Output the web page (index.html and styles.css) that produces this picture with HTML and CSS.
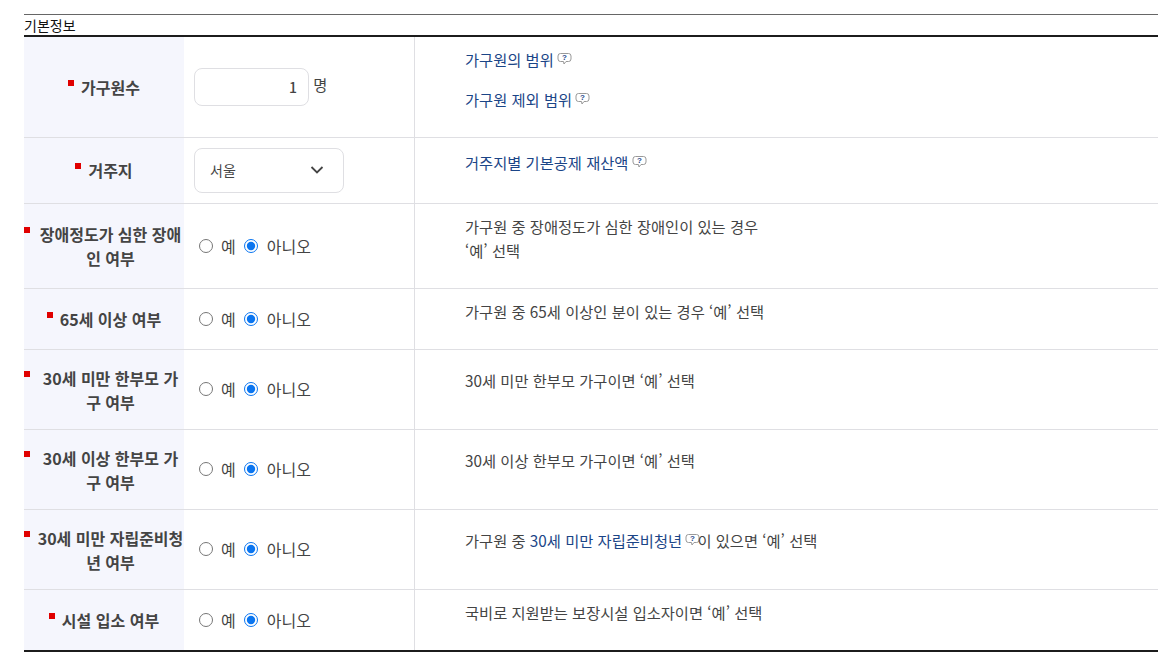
FILE: index.html
```html
<!DOCTYPE html>
<html lang="ko">
<head>
    <meta charset="UTF-8">
    <meta name="viewport" content="width=device-width, initial-scale=1.0">
    <title>기본정보</title>
    <link rel="stylesheet" href="styles.css">
</head>
<body>
    <table class="info-table">
        <caption>기본정보</caption>
        <tbody>
            <tr class="row-household">
                <th><div class="label"><span class="req"></span><span class="label-text">가구원수</span></div></th>
                <td class="field">
                    <input class="num-input" type="text" value="1"> <span class="unit">명</span>
                </td>
                <td class="note links">
                    <p><a href="#">가구원의 범위</a> <svg class="help" viewBox="0 0 14 12"><path d="M3 .5h8A2.500 2.500 0 0 1 13.500 3v3A2.500 2.500 0 0 1 11 8.500H8.500L6.500 11 6 8.500H3A2.500 2.500 0 0 1 .5 6V3A2.500 2.500 0 0 1 3 .5z"/><text x="7" y="7">?</text></svg></p>
                    <p><a href="#">가구원 제외 범위</a> <svg class="help" viewBox="0 0 14 12"><path d="M3 .5h8A2.500 2.500 0 0 1 13.500 3v3A2.500 2.500 0 0 1 11 8.500H8.500L6.500 11 6 8.500H3A2.500 2.500 0 0 1 .5 6V3A2.500 2.500 0 0 1 3 .5z"/><text x="7" y="7">?</text></svg></p>
                </td>
            </tr>
            <tr class="row-region">
                <th><div class="label"><span class="req"></span><span class="label-text">거주지</span></div></th>
                <td class="field">
                    <div class="select-wrap">
                        <select class="region-select"><option>서울</option></select>
                        <svg class="chevron" width="14" height="8" viewBox="0 0 14 8"><path d="M1.500 1 7 6.500 12.500 1" fill="none" stroke="#444" stroke-width="1.800"/></svg>
                    </div>
                </td>
                <td class="note">
                    <p><a href="#">거주지별 기본공제 재산액</a> <svg class="help" viewBox="0 0 14 12"><path d="M3 .5h8A2.500 2.500 0 0 1 13.500 3v3A2.500 2.500 0 0 1 11 8.500H8.500L6.500 11 6 8.500H3A2.500 2.500 0 0 1 .5 6V3A2.500 2.500 0 0 1 3 .5z"/><text x="7" y="7">?</text></svg></p>
                </td>
            </tr>
            <tr class="row-disabled">
                <th><div class="label"><span class="req"></span><span class="label-text">장애정도가 심한 장애인 여부</span></div></th>
                <td class="field">
                    <div class="radios">
                        <label><input type="radio" name="q1"> 예</label>
                        <label><input type="radio" name="q1" checked> 아니오</label>
                    </div>
                </td>
                <td class="note"><p>가구원 중 장애정도가 심한 장애인이 있는 경우<br>‘예’ 선택</p></td>
            </tr>
            <tr class="row-senior">
                <th><div class="label"><span class="req"></span><span class="label-text">65세 이상 여부</span></div></th>
                <td class="field">
                    <div class="radios">
                        <label><input type="radio" name="q2"> 예</label>
                        <label><input type="radio" name="q2" checked> 아니오</label>
                    </div>
                </td>
                <td class="note"><p>가구원 중 65세 이상인 분이 있는 경우 ‘예’ 선택</p></td>
            </tr>
            <tr class="row-tall">
                <th><div class="label"><span class="req"></span><span class="label-text">30세 미만 한부모 가구 여부</span></div></th>
                <td class="field">
                    <div class="radios">
                        <label><input type="radio" name="q3"> 예</label>
                        <label><input type="radio" name="q3" checked> 아니오</label>
                    </div>
                </td>
                <td class="note"><p>30세 미만 한부모 가구이면 ‘예’ 선택</p></td>
            </tr>
            <tr class="row-tall">
                <th><div class="label"><span class="req"></span><span class="label-text">30세 이상 한부모 가구 여부</span></div></th>
                <td class="field">
                    <div class="radios">
                        <label><input type="radio" name="q4"> 예</label>
                        <label><input type="radio" name="q4" checked> 아니오</label>
                    </div>
                </td>
                <td class="note"><p>30세 이상 한부모 가구이면 ‘예’ 선택</p></td>
            </tr>
            <tr class="row-tall">
                <th><div class="label"><span class="req"></span><span class="label-text">30세 미만 자립준비청년 여부</span></div></th>
                <td class="field">
                    <div class="radios">
                        <label><input type="radio" name="q5"> 예</label>
                        <label><input type="radio" name="q5" checked> 아니오</label>
                    </div>
                </td>
                <td class="note"><p>가구원 중 <a href="#">30세 미만 자립준비청년</a> <svg class="help tight" viewBox="0 0 14 12"><path d="M3 .5h8A2.500 2.500 0 0 1 13.500 3v3A2.500 2.500 0 0 1 11 8.500H8.500L6.500 11 6 8.500H3A2.500 2.500 0 0 1 .5 6V3A2.500 2.500 0 0 1 3 .5z"/><text x="7" y="7">?</text></svg>이 있으면 ‘예’ 선택</p></td>
            </tr>
            <tr class="row-facility">
                <th><div class="label"><span class="req"></span><span class="label-text">시설 입소 여부</span></div></th>
                <td class="field">
                    <div class="radios">
                        <label><input type="radio" name="q6"> 예</label>
                        <label><input type="radio" name="q6" checked> 아니오</label>
                    </div>
                </td>
                <td class="note"><p>국비로 지원받는 보장시설 입소자이면 ‘예’ 선택</p></td>
            </tr>
        </tbody>
    </table>
</body>
</html>
```

FILE: styles.css
```css
* {
    box-sizing: border-box;
}

body {
    margin: 0;
    padding: 14px 16px 0 24px;
    background: #fff;
    color: #444;
    font-family: "Noto Sans CJK KR", "Noto Sans", sans-serif;
    font-size: 15.3px;
}

.info-table {
    width: 100%;
    border-collapse: collapse;
    table-layout: fixed;
    border-bottom: 2px solid #1c1c1c;
}

.info-table caption {
    height: 21px;
    border-top: 1px solid #666;
    color: #111;
    font-size: 14px;
    line-height: 20px;
    text-align: left;
}

.info-table tbody {
    border-top: 2px solid #1c1c1c;
}

.info-table tr {
    border-bottom: 1px solid #dfdfe3;
}

.info-table tr:last-child {
    border-bottom: none;
}

.info-table th {
    width: 160px;
    padding: 0;
    background: #f5f6fd;
    color: #444;
    font-size: 16px;
    font-weight: 700;
    line-height: 24px;
}

.label {
    display: flex;
    justify-content: center;
    gap: 7px;
}

.label-text {
    min-width: 0;
    text-align: center;
    word-break: break-all;
}

.req {
    flex: none;
    width: 6px;
    height: 6px;
    margin-top: 5px;
    background: #e00000;
}

.field {
    width: 230px;
    padding: 0 10px;
    border-right: 1px solid #dfdfe3;
}

.note {
    padding: 0 0 0 50.5px;
    vertical-align: top;
    line-height: 24px;
}

.note p {
    margin: 0;
}

.note a {
    color: #1b4587;
    text-decoration: none;
}

.links p + p {
    margin-top: 16px;
}

.help {
    width: 15px;
    height: 12px;
    margin-left: -1px;
    vertical-align: 1px;
}

.help path {
    fill: #fff;
    stroke: #999;
}

.help text {
    fill: #1f4a8c;
    font-family: "Liberation Sans", sans-serif;
    font-size: 8px;
    font-weight: 700;
    text-anchor: middle;
}

.help.tight {
    margin-right: -3px;
}

/* row heights */
.row-household { height: 101px; }
.row-region { height: 66px; }
.row-disabled { height: 85px; }
.row-senior { height: 61px; }
.row-tall { height: 80px; }
.row-facility { height: 62px; }

.row-household .note { padding-top: 10px; }
.row-region .note { padding-top: 12px; }
.row-disabled .note { padding-top: 10px; }
.row-senior .note { padding-top: 10px; }
.row-tall .note { padding-top: 18px; }
.row-facility .note { padding-top: 10px; }

.row-tall th {
    padding-top: 2px;
}

.num-input {
    width: 115px;
    height: 38px;
    padding: 0 11px;
    border: 1px solid #dfdfe3;
    border-radius: 8px;
    color: #444;
    font-family: inherit;
    font-size: 14px;
    font-weight: 500;
    text-align: right;
}

.unit {
    vertical-align: 2px;
}

.select-wrap {
    position: relative;
    width: 150px;
}

.region-select {
    display: block;
    width: 100%;
    height: 45px;
    padding: 0 15px;
    border: 1px solid #dfdfe3;
    border-radius: 8px;
    background: #fff;
    color: #444;
    font-family: inherit;
    font-size: 14px;
    appearance: none;
}

.chevron {
    position: absolute;
    top: 18px;
    right: 20px;
}

.radios {
    display: flex;
    gap: 8px;
    padding-left: 5px;
}

.radios label {
    display: flex;
    align-items: center;
    gap: 8px;
    font-size: 16px;
    line-height: 24px;
}

.radios label + label {
    gap: 9px;
}

.radios input {
    width: 14px;
    height: 14px;
    margin: 0;
    accent-color: #0a75f0;
}
```
